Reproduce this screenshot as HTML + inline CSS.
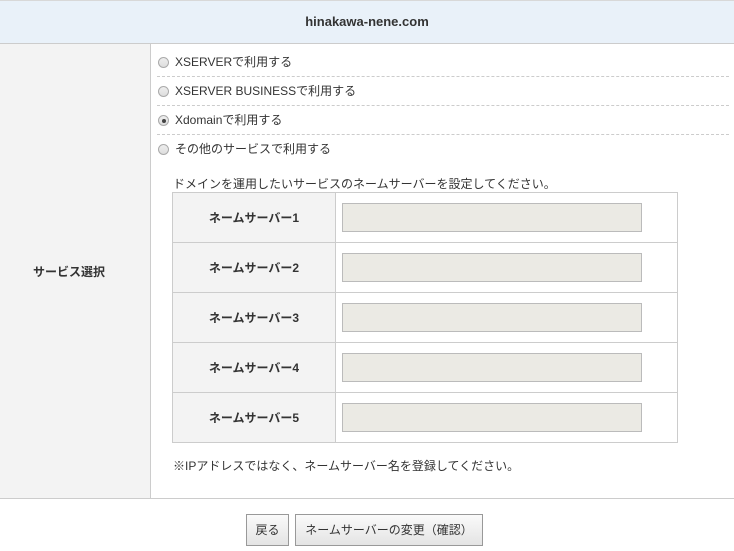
<!DOCTYPE html>
<html><head><meta charset="utf-8"><style>
*{box-sizing:border-box;margin:0;padding:0}
body{width:734px;height:551px;background:#fff;font-family:"Liberation Sans","Noto Sans CJK JP",sans-serif;font-size:12px;color:#333;position:relative;overflow:hidden}
.hd{position:absolute;left:0;top:0;width:734px;height:44px;background:#e9f1f9;border-top:1px solid #d8d8d8;border-bottom:1px solid #ccc;text-align:center;line-height:42px;font-weight:bold;font-size:13px}
.lc{position:absolute;left:0;top:44px;width:151px;height:455px;background:#f3f3f3;border-right:1px solid #ccc;border-bottom:1px solid #ccc}
.lc span{position:absolute;left:33px;top:219px;font-weight:bold}
.mc{position:absolute;left:151px;top:44px;width:583px;height:455px;border-bottom:1px solid #ccc}
.r{position:absolute;left:6px;width:572px;height:29px;line-height:29px;padding-left:18px}
.r.d{border-bottom:1px dashed #ccc}
.rb{position:absolute;left:1px;top:9px;width:11px;height:11px;border-radius:50%;border:1px solid #aaa;background:linear-gradient(#eee,#ddd)}
.rb.on::after{content:"";position:absolute;left:2.5px;top:2.5px;width:4px;height:4px;border-radius:50%;background:#444}
table{position:absolute;left:21px;top:148px;width:506px;border-collapse:collapse}
td{border:1px solid #ccc;height:50px}
td.l{width:163px;background:#f3f3f3;text-align:center;font-weight:bold}
td.v{padding-left:6px}
.in{width:300px;height:29px;background:#ebeae4;border:1px solid #bbb}
.btn{position:absolute;top:514px;height:32px;border:1px solid #999;background:linear-gradient(#fafafa,#e4e4e4);text-align:center;line-height:30px;font-size:12px}
</style></head><body>
<div class="hd">hinakawa-nene.com</div>
<div class="lc"><span>サービス選択</span></div>
<div class="mc">
<div class="r d" style="top:4px"><i class="rb"></i>XSERVERで利用する</div>
<div class="r d" style="top:33px"><i class="rb"></i>XSERVER BUSINESSで利用する</div>
<div class="r d" style="top:62px"><i class="rb on"></i>Xdomainで利用する</div>
<div class="r" style="top:91px"><i class="rb"></i>その他のサービスで利用する</div>
<div style="position:absolute;left:22px;top:131px">ドメインを運用したいサービスのネームサーバーを設定してください。</div>
<table>
<tr><td class="l">ネームサーバー1</td><td class="v"><div class="in"></div></td></tr>
<tr><td class="l">ネームサーバー2</td><td class="v"><div class="in"></div></td></tr>
<tr><td class="l">ネームサーバー3</td><td class="v"><div class="in"></div></td></tr>
<tr><td class="l">ネームサーバー4</td><td class="v"><div class="in"></div></td></tr>
<tr><td class="l">ネームサーバー5</td><td class="v"><div class="in"></div></td></tr>
</table>
<div style="position:absolute;left:22px;top:413px">※IPアドレスではなく、ネームサーバー名を登録してください。</div>
</div>
<div class="btn" style="left:246px;width:43px">戻る</div>
<div class="btn" style="left:295px;width:188px">ネームサーバーの変更（確認）</div>
</body></html>
